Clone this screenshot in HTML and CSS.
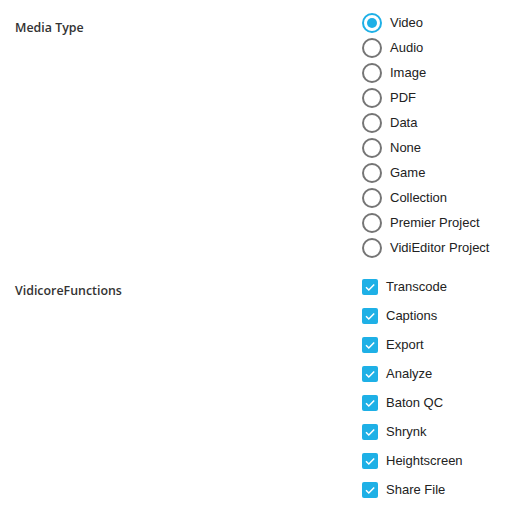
FILE: index.html
```html
<!DOCTYPE html>
<html>
<head>
<meta charset="utf-8">
<link rel="stylesheet" href="styles.css">
</head>
<body>
<div class="form">
  <div class="field">
    <div class="label">Media Type</div>
    <div class="options radios">
      <label class="radio"><span class="circle checked"></span><span class="text">Video</span></label>
      <label class="radio"><span class="circle"></span><span class="text">Audio</span></label>
      <label class="radio"><span class="circle"></span><span class="text">Image</span></label>
      <label class="radio"><span class="circle"></span><span class="text">PDF</span></label>
      <label class="radio"><span class="circle"></span><span class="text">Data</span></label>
      <label class="radio"><span class="circle"></span><span class="text">None</span></label>
      <label class="radio"><span class="circle"></span><span class="text">Game</span></label>
      <label class="radio"><span class="circle"></span><span class="text">Collection</span></label>
      <label class="radio"><span class="circle"></span><span class="text">Premier Project</span></label>
      <label class="radio"><span class="circle"></span><span class="text">VidiEditor Project</span></label>
    </div>
  </div>
  <div class="field field-checks">
    <div class="label">VidicoreFunctions</div>
    <div class="options checks">
      <label class="check"><span class="box"><svg viewBox="0 0 16 16" width="16" height="16"><path d="M4 8.2 L6.8 11 L12.2 5.4" fill="none" stroke="#fff" stroke-width="1.5"/></svg></span><span class="text">Transcode</span></label>
      <label class="check"><span class="box"><svg viewBox="0 0 16 16" width="16" height="16"><path d="M4 8.2 L6.8 11 L12.2 5.4" fill="none" stroke="#fff" stroke-width="1.5"/></svg></span><span class="text">Captions</span></label>
      <label class="check"><span class="box"><svg viewBox="0 0 16 16" width="16" height="16"><path d="M4 8.2 L6.8 11 L12.2 5.4" fill="none" stroke="#fff" stroke-width="1.5"/></svg></span><span class="text">Export</span></label>
      <label class="check"><span class="box"><svg viewBox="0 0 16 16" width="16" height="16"><path d="M4 8.2 L6.8 11 L12.2 5.4" fill="none" stroke="#fff" stroke-width="1.5"/></svg></span><span class="text">Analyze</span></label>
      <label class="check"><span class="box"><svg viewBox="0 0 16 16" width="16" height="16"><path d="M4 8.2 L6.8 11 L12.2 5.4" fill="none" stroke="#fff" stroke-width="1.5"/></svg></span><span class="text">Baton QC</span></label>
      <label class="check"><span class="box"><svg viewBox="0 0 16 16" width="16" height="16"><path d="M4 8.2 L6.8 11 L12.2 5.4" fill="none" stroke="#fff" stroke-width="1.5"/></svg></span><span class="text">Shrynk</span></label>
      <label class="check"><span class="box"><svg viewBox="0 0 16 16" width="16" height="16"><path d="M4 8.2 L6.8 11 L12.2 5.4" fill="none" stroke="#fff" stroke-width="1.5"/></svg></span><span class="text">Heightscreen</span></label>
      <label class="check"><span class="box"><svg viewBox="0 0 16 16" width="16" height="16"><path d="M4 8.2 L6.8 11 L12.2 5.4" fill="none" stroke="#fff" stroke-width="1.5"/></svg></span><span class="text">Share File</span></label>
    </div>
  </div>
</div>
</body>
</html>
```

FILE: styles.css
```css
html, body {
  margin: 0;
  padding: 0;
  background: #fff;
}
.form {
  padding: 10px 0 0 15px;
}
.field {
  display: flex;
}
.field-checks {
  margin-top: 12px;
}
.label {
  width: 347px;
  font-family: "Open Sans", sans-serif;
  font-weight: 600;
  font-size: 12.4px;
  color: #333;
  line-height: 20px;
  padding-top: 8px;
}
.field-checks .label {
  padding-top: 9px;
}
.options {
  display: flex;
  flex-direction: column;
}
.radio, .check {
  display: flex;
  align-items: center;
  font-family: "Liberation Sans", Arial, sans-serif;
  font-size: 13px;
  color: #222;
}
.radio {
  height: 25px;
}
.circle {
  box-sizing: border-box;
  width: 20px;
  height: 20px;
  border: 2px solid #757575;
  border-radius: 50%;
  margin-right: 8px;
  display: flex;
  align-items: center;
  justify-content: center;
}
.circle.checked {
  border-color: #1eb0e6;
}
.circle.checked::after {
  content: "";
  width: 10px;
  height: 10px;
  border-radius: 50%;
  background: #1eb0e6;
}
.check {
  height: 29px;
}
.box {
  width: 16px;
  height: 16px;
  background: #1eb0e6;
  border-radius: 2px;
  margin-right: 8px;
  display: flex;
}
```
